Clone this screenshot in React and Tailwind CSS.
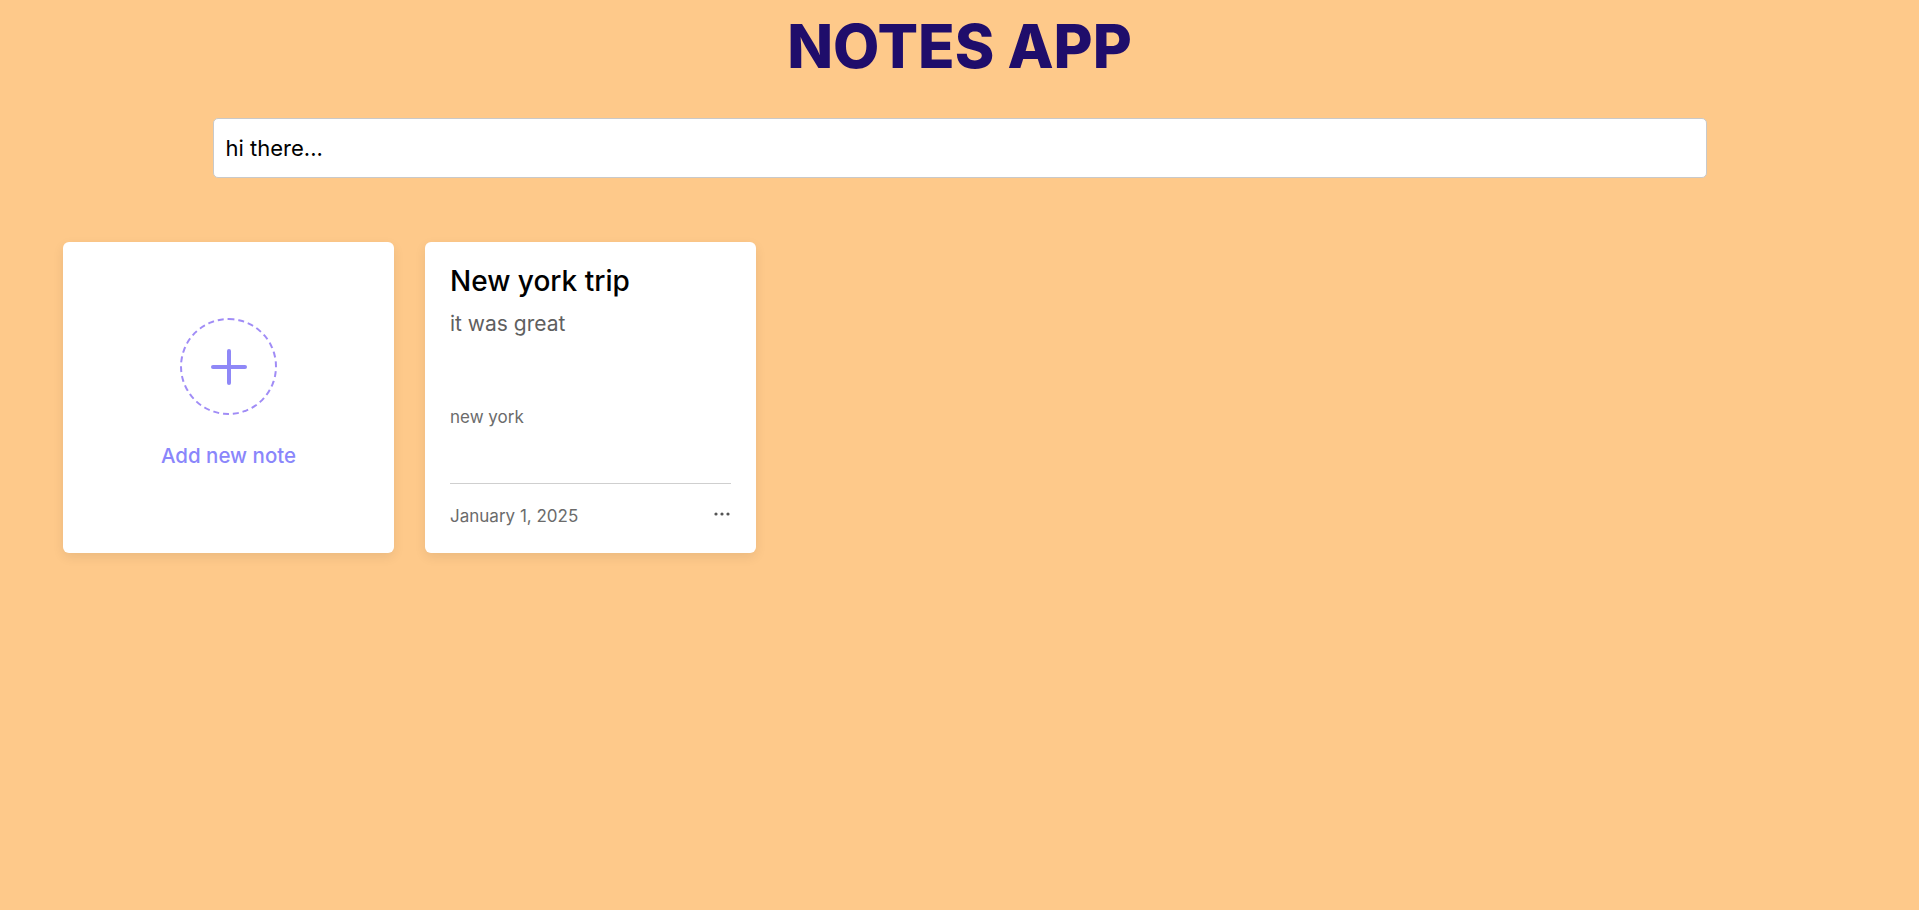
function AddNoteCard() {
  return (
    <div className="w-[331px] h-[311px] bg-white rounded-[6px] shadow-[0_4px_12px_rgba(0,0,0,0.08)] flex flex-col items-center">
      {/* circle with plus */}
      <div className="mt-[76px] w-[97px] h-[97px] rounded-full border-2 border-dashed border-[#a08cf6] flex items-center justify-center">
        <svg width="36" height="36" viewBox="0 0 36 36">
          <line x1="18" y1="2" x2="18" y2="34" stroke="#8f88f7" strokeWidth="4" strokeLinecap="round" />
          <line x1="2" y1="18" x2="34" y2="18" stroke="#8f88f7" strokeWidth="4" strokeLinecap="round" />
        </svg>
      </div>
      <p className="mt-[27px] text-[20.5px] leading-[28px] text-[#8a86fb] font-medium">
        Add new note
      </p>
    </div>
  );
}

function NoteCard({ title, body, tag, date }) {
  return (
    <div className="w-[331px] h-[311px] bg-white rounded-[6px] shadow-[0_4px_12px_rgba(0,0,0,0.08)] flex flex-col px-[25px] pt-[24px] pb-[25px]">
      <h2 className="text-[28px] leading-[30px] font-medium text-black">
        {title}
      </h2>
      <p className="mt-[14px] text-[21px] leading-[28px] text-[#5f5f5f]">
        {body}
      </p>
      <p className="mt-[67px] text-[17px] leading-[24px] text-[#6b6b6b]">
        {tag}
      </p>

      {/* footer */}
      <div className="mt-auto">
        <div className="border-t border-[#cfcfcf]" />
        <div className="mt-[20px] flex items-center justify-between">
          <span className="text-[17px] leading-[24px] text-[#6b6b6b]">
            {date}
          </span>
          <svg width="16" height="6" viewBox="0 0 16 6" className="mr-[1px] -mt-[5px]">
            <circle cx="2" cy="3" r="1.6" fill="#555" />
            <circle cx="8" cy="3" r="1.6" fill="#555" />
            <circle cx="14" cy="3" r="1.6" fill="#555" />
          </svg>
        </div>
      </div>
    </div>
  );
}

export default function App() {
  return (
    <div className="min-h-screen bg-[#fec98a] font-['Inter',sans-serif]">
      {/* Title */}
      <h1 className="pt-[14px] text-center text-[60px] leading-[64px] font-extrabold text-[#1f0d6b]">
        NOTES APP
      </h1>

      {/* Search */}
      <div className="mt-[40px] flex justify-center">
        <input
          className="w-[1494px] h-[60px] bg-white border border-[#c9c9c9] rounded-[5px] px-[12px] text-[22px] text-black outline-none placeholder:text-black"
          placeholder="hi there..."
        />
      </div>

      {/* Notes grid */}
      <div className="mt-[64px] px-[63px] flex gap-[31px]">
        <AddNoteCard />
        <NoteCard
          title="New york trip"
          body="it was great"
          tag="new york"
          date="January 1, 2025"
        />
      </div>
    </div>
  );
}
